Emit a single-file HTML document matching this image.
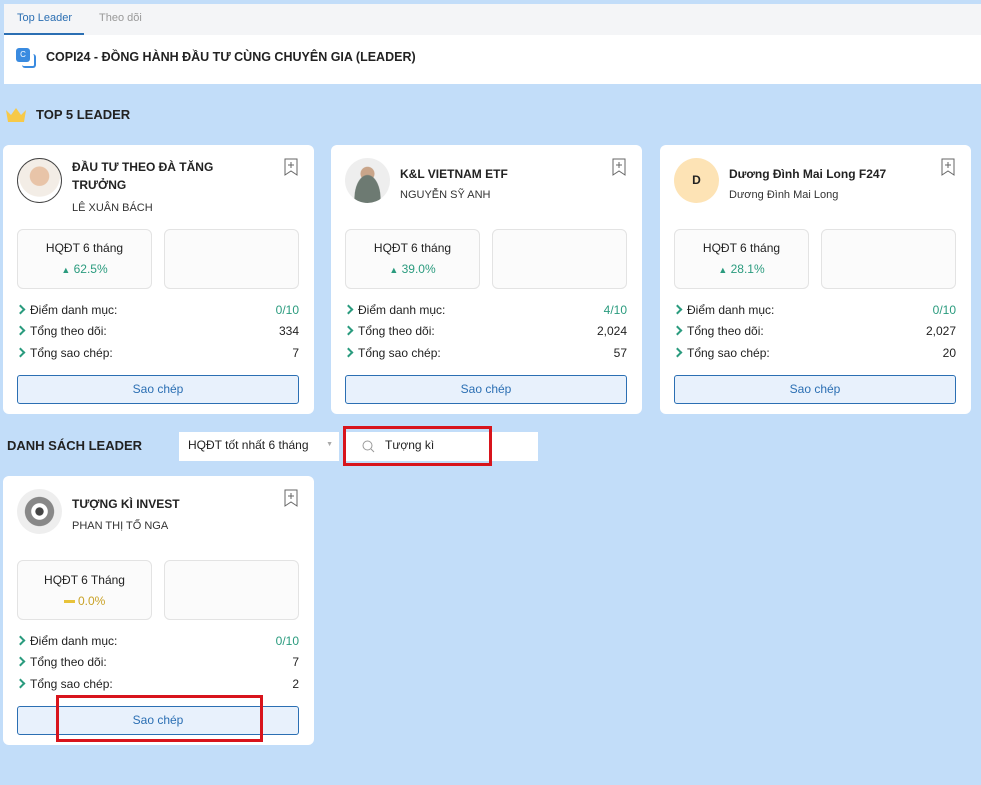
<!DOCTYPE html>
<html><head><meta charset="utf-8"><style>
*{box-sizing:border-box;margin:0;padding:0}
body{width:981px;height:785px;background:#c2ddf9;font-family:"Liberation Sans","Noto Sans CJK SC",sans-serif;color:#222;position:relative;overflow:hidden}
.abs{position:absolute}
.tabs{left:4px;top:4px;width:977px;height:31px;background:#f4f5f7;font-size:11px;color:#999}
.header{left:4px;top:35px;width:977px;height:49px;background:#fff}
.card{position:absolute;width:311px;height:269px;background:#fff;border-radius:6px}
.av{position:absolute;left:14px;top:13px;width:45px;height:45px;border-radius:50%;overflow:hidden}
.title{position:absolute;left:69px;top:14px;font-size:12px;font-weight:bold;line-height:18px;width:170px;color:#222}
.sub{font-size:11px;font-weight:normal;color:#333}
.bm{position:absolute;left:281px;top:13px}
.box{position:absolute;top:84px;width:135px;height:60px;border:1px solid #e3e3e3;border-radius:6px;background:#fbfbfb;text-align:center;font-size:12px}
.rows{position:absolute;left:14px;top:154px;width:282px;font-size:12px}
.row{height:21.5px;display:flex;justify-content:space-between;align-items:center}
.row span:first-child::before{content:"";display:inline-block;width:5px;height:5px;border-right:2px solid #2a9b7e;border-top:2px solid #2a9b7e;transform:rotate(45deg);margin:0 6px 1px 0}
.btn{position:absolute;left:14px;top:230px;width:282px;height:29px;border:1px solid #2b6fb3;border-radius:3px;background:#e8f1fc;color:#2b6fb3;font-size:12px;text-align:center;line-height:27px}
.g{color:#2a9b7e}
</style></head><body>
<div class="abs tabs"><div class="abs" style="left:13px;top:8px;color:#2b6fb3">Top Leader</div><div class="abs" style="left:0;top:29px;width:80px;height:2px;background:#2b6fb3"></div><div class="abs" style="left:95px;top:8px">Theo dõi</div></div>
<div class="abs header">
<div class="abs" style="left:12px;top:13px;width:14px;height:14px;background:#3a8be0;border-radius:3px;color:#fff;font-size:8px;text-align:center;line-height:13px">C</div>
<div class="abs" style="left:18px;top:19px;width:14px;height:14px;border:2px solid #3a8be0;border-radius:3px;border-left:none;border-top:none"></div>
<div class="abs" style="left:42px;top:15px;font-size:12.5px;font-weight:bold">COPI24 - ĐỒNG HÀNH ĐẦU TƯ CÙNG CHUYÊN GIA (LEADER)</div></div>
<svg class="abs" style="left:5px;top:107px" width="22" height="16" viewBox="0 0 22 16"><path d="M1 3l5 5 5-7 5 7 5-5-2 12H3z" fill="#f7c948"/></svg>
<div class="abs" style="left:36px;top:107px;font-size:13px;font-weight:bold;color:#222">TOP 5 LEADER</div>

<div class="card" style="left:3px;top:145px">
<div class="av" style="background:radial-gradient(circle at 50% 40%,#e8c4a8 0 28%,#f3ede6 30% 60%,#fff 62%);border:1px solid #444"></div>
<div class="title" style="top:13px">ĐẦU TƯ THEO ĐÀ TĂNG TRƯỞNG<div class="sub" style="margin-top:5px">LÊ XUÂN BÁCH</div></div>
<svg class="bm" width="14" height="18" viewBox="0 0 14 18"><path d="M1 1h12v16l-6-4-6 4z" fill="none" stroke="#666"/><path d="M7 4v6M4 7h6" stroke="#666"/></svg>
<div class="box" style="left:14px"><div style="margin-top:11px">HQĐT 6 tháng</div><div class="g" style="margin-top:7px"><span style="font-size:9px">▲</span> 62.5%</div></div>
<div class="box" style="left:161px"></div>
<div class="rows"><div class="row"><span>Điểm danh mục:</span><span class="g">0/10</span></div><div class="row"><span>Tổng theo dõi:</span><span>334</span></div><div class="row"><span>Tổng sao chép:</span><span>7</span></div></div>
<div class="btn">Sao chép</div></div>

<div class="card" style="left:331px;top:145px">
<div class="av" style="background:radial-gradient(ellipse at 50% 90%,#6d7a72 0 40%,transparent 42%),radial-gradient(circle at 50% 35%,#c9a58a 0 18%,transparent 20%),#eee"></div>
<div class="title" style="top:20px">K&amp;L VIETNAM ETF<div class="sub" style="margin-top:3px">NGUYỄN SỸ ANH</div></div>
<svg class="bm" width="14" height="18" viewBox="0 0 14 18"><path d="M1 1h12v16l-6-4-6 4z" fill="none" stroke="#666"/><path d="M7 4v6M4 7h6" stroke="#666"/></svg>
<div class="box" style="left:14px"><div style="margin-top:11px">HQĐT 6 tháng</div><div class="g" style="margin-top:7px"><span style="font-size:9px">▲</span> 39.0%</div></div>
<div class="box" style="left:161px"></div>
<div class="rows"><div class="row"><span>Điểm danh mục:</span><span class="g">4/10</span></div><div class="row"><span>Tổng theo dõi:</span><span>2,024</span></div><div class="row"><span>Tổng sao chép:</span><span>57</span></div></div>
<div class="btn">Sao chép</div></div>

<div class="card" style="left:660px;top:145px">
<div class="av" style="background:#fde3b5;text-align:center;line-height:45px;font-size:12px;font-weight:bold">D</div>
<div class="title" style="top:20px;font-size:12px">Dương Đình Mai Long F247<div class="sub" style="margin-top:3px">Dương Đình Mai Long</div></div>
<svg class="bm" width="14" height="18" viewBox="0 0 14 18"><path d="M1 1h12v16l-6-4-6 4z" fill="none" stroke="#666"/><path d="M7 4v6M4 7h6" stroke="#666"/></svg>
<div class="box" style="left:14px"><div style="margin-top:11px">HQĐT 6 tháng</div><div class="g" style="margin-top:7px"><span style="font-size:9px">▲</span> 28.1%</div></div>
<div class="box" style="left:161px"></div>
<div class="rows"><div class="row"><span>Điểm danh mục:</span><span class="g">0/10</span></div><div class="row"><span>Tổng theo dõi:</span><span>2,027</span></div><div class="row"><span>Tổng sao chép:</span><span>20</span></div></div>
<div class="btn">Sao chép</div></div>

<div class="abs" style="left:7px;top:438px;font-size:13px;font-weight:bold">DANH SÁCH LEADER</div>
<div class="abs" style="left:179px;top:432px;width:160px;height:29px;background:#fff;font-size:12px;padding:6px 9px">HQĐT tốt nhất 6 tháng<span style="position:absolute;right:6px;top:9px;font-size:7px;color:#aaa">▼</span></div>
<div class="abs" style="left:343px;top:432px;width:195px;height:29px;background:#fff;font-size:12px;padding:6px 0 0 42px">Tượng kì</div>
<svg class="abs" style="left:362px;top:440px" width="13" height="13"><circle cx="5.5" cy="5.5" r="4.5" fill="none" stroke="#999"/><path d="M9 9l3 3" stroke="#999"/></svg>
<div class="abs" style="left:343px;top:426px;width:149px;height:40px;border:3px solid #d8141c"></div>

<div class="card" style="left:3px;top:476px">
<div class="av" style="background:radial-gradient(circle,#444 0 12%,#fff 14% 25%,#888 27% 45%,#eee 47%)"></div>
<div class="title" style="top:19px">TƯỢNG KÌ INVEST<div class="sub" style="margin-top:4px">PHAN THỊ TỐ NGA</div></div>
<svg class="bm" width="14" height="18" viewBox="0 0 14 18"><path d="M1 1h12v16l-6-4-6 4z" fill="none" stroke="#666"/><path d="M7 4v6M4 7h6" stroke="#666"/></svg>
<div class="box" style="left:14px"><div style="margin-top:12px">HQĐT 6 Tháng</div><div style="margin-top:7px;color:#c9a227"><span style="display:inline-block;width:11px;height:3px;background:#e8c33a;vertical-align:middle"></span> 0.0%</div></div>
<div class="box" style="left:161px"></div>
<div class="rows"><div class="row"><span>Điểm danh mục:</span><span class="g">0/10</span></div><div class="row"><span>Tổng theo dõi:</span><span>7</span></div><div class="row"><span>Tổng sao chép:</span><span>2</span></div></div>
<div class="btn">Sao chép</div></div>
<div class="abs" style="left:56px;top:695px;width:207px;height:47px;border:3px solid #d8141c"></div>
</body></html>
